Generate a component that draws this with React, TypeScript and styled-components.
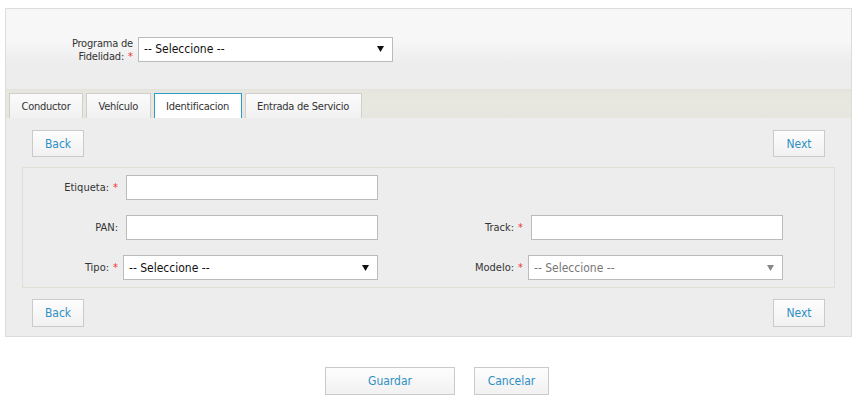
import React from "react";
import styled, { createGlobalStyle } from "styled-components";

const Global = createGlobalStyle`
  html, body { margin: 0; padding: 0; background: #fff; }
  body { font-family: "DejaVu Sans Condensed", Tahoma, "DejaVu Sans", sans-serif; font-size: 11px; color: #333; }
  * { box-sizing: border-box; }
`;

const Page = styled.div`
  padding: 8px 5px 0 5px;
`;

const Panel = styled.div`
  border: 1px solid #dcdcdc;
  background: #ededed;
`;

const TopSection = styled.div`
  height: 80px;
  background: linear-gradient(#f7f7f7 0px, #f7f7f7 32px, #ededed 54px, #ededed 100%);
  display: flex;
  align-items: center;
`;

const TopLabel = styled.label`
  width: 127px;
  display: flex;
  flex-direction: column;
  align-items: flex-end;
  white-space: nowrap;
  font-size: 11px;
  letter-spacing: -0.2px;
  color: #333;
  margin-right: 5px;
  padding-top: 1px;
`;

const LabelLine = styled.span`
  display: block;
  height: 13px;
  line-height: 13px;
`;

const Req = styled.span`
  color: #ee3333;
  margin-left: 4px;
  letter-spacing: 0;
`;

const SelectBox = styled.div<{ $w: number; $disabled?: boolean }>`
  width: ${(p) => p.$w}px;
  height: 25px;
  border: 1px solid #bbb;
  background: #fff;
  display: flex;
  align-items: center;
  justify-content: space-between;
  padding: 0 8px 0 5px;
  font-size: 12px;
  color: ${(p) => (p.$disabled ? "#777" : "#111")};
`;

const TabStrip = styled.div`
  height: 29px;
  background: linear-gradient(#e6e5de, #e8e7e0 60%, #e6e5de);
  display: flex;
  align-items: flex-end;
  gap: 3px;
  padding-left: 3px;
  border-top: 1px solid #e3e2db;
`;

const Tab = styled.div<{ $active?: boolean }>`
  height: 25px;
  padding: 0 11.5px;
  display: flex;
  align-items: center;
  font-size: 11px;
  letter-spacing: -0.25px;
  color: #333;
  background: ${(p) => (p.$active ? "#fff" : "linear-gradient(#fbfbfb, #f1f1f1)")};
  border: 1px solid ${(p) => (p.$active ? "#2b9ccf" : "#cfcfcf")};
  border-bottom: none;
`;

const Content = styled.div`
  padding: 12px 26px 9px 16px;
`;

const NavRow = styled.div`
  display: flex;
  justify-content: space-between;
  padding-left: 10px;
`;

const Button = styled.button<{ $w?: number; $h?: number }>`
  width: ${(p) => p.$w ?? 52}px;
  height: ${(p) => p.$h ?? 27}px;
  border: 1px solid #cacaca;
  background: linear-gradient(#fdfdfd, #f1f1f1);
  color: #2e8fc4;
  font-family: "DejaVu Sans Condensed", Tahoma, "DejaVu Sans", sans-serif;
  font-size: 12px;
  padding: 0;
  cursor: pointer;
`;

const Fieldset = styled.div`
  margin: 10px -10px 11px 0;
  border: 1px solid #e0dfd6;
  padding: 7px 0 7px 0;
  display: grid;
  grid-template-columns: 100px 255px 50px 100px 255px 50px;
  grid-auto-rows: 25px;
  row-gap: 15px;
`;

const FieldLabel = styled.label<{ $col: number }>`
  grid-column: ${(p) => p.$col};
  display: flex;
  align-items: center;
  justify-content: flex-end;
  padding-right: 5px;
  font-size: 11px;
  color: #333;
  white-space: nowrap;
`;

const Cell = styled.div<{ $col: number }>`
  grid-column: ${(p) => p.$col};
  display: flex;
  justify-content: flex-end;
`;

const TextInput = styled.input`
  width: 252px;
  height: 25px;
  border: 1px solid #bbb;
  background: #fff;
  font-size: 12px;
  padding: 0 4px;
  outline: none;
`;

const Footer = styled.div`
  display: flex;
  justify-content: center;
  align-items: flex-start;
  gap: 19px;
  padding: 30px 0 0 17px;
`;

const Arrow = ({ color }: { color: string }) => (
  <svg width="7" height="6" viewBox="0 0 7 6">
    <path d="M0 0 H7 L3.5 6 Z" fill={color} />
  </svg>
);

const Select = ({ w, disabled }: { w: number; disabled?: boolean }) => (
  <SelectBox $w={w} $disabled={disabled}>
    <span>-- Seleccione --</span>
    <Arrow color={disabled ? "#888" : "#111"} />
  </SelectBox>
);

export default function App() {
  return (
    <Page>
      <Global />
      <Panel>
        <TopSection>
          <TopLabel>
            <LabelLine>Programa de</LabelLine>
            <LabelLine>
              <span>Fidelidad:</span>
              <Req>*</Req>
            </LabelLine>
          </TopLabel>
          <Select w={255} />
        </TopSection>
        <TabStrip>
          <Tab>Conductor</Tab>
          <Tab>Vehículo</Tab>
          <Tab $active>Identificacion</Tab>
          <Tab>Entrada de Servicio</Tab>
        </TabStrip>
        <Content>
          <NavRow>
            <Button>Back</Button>
            <Button>Next</Button>
          </NavRow>
          <Fieldset>
            <FieldLabel $col={1}>
              Etiqueta:<Req>*</Req>
            </FieldLabel>
            <Cell $col={2}>
              <TextInput />
            </Cell>
            <FieldLabel $col={1}>PAN:</FieldLabel>
            <Cell $col={2}>
              <TextInput />
            </Cell>
            <FieldLabel $col={4}>
              Track:<Req>*</Req>
            </FieldLabel>
            <Cell $col={5}>
              <TextInput />
            </Cell>
            <FieldLabel $col={1}>
              Tipo:<Req>*</Req>
            </FieldLabel>
            <Cell $col={2}>
              <Select w={255} />
            </Cell>
            <FieldLabel $col={4}>
              Modelo:<Req>*</Req>
            </FieldLabel>
            <Cell $col={5}>
              <Select w={255} disabled />
            </Cell>
          </Fieldset>
          <NavRow>
            <Button $h={28}>Back</Button>
            <Button $h={28}>Next</Button>
          </NavRow>
        </Content>
      </Panel>
      <Footer>
        <Button $w={130} $h={28}>Guardar</Button>
        <Button $w={75} $h={28}>Cancelar</Button>
      </Footer>
    </Page>
  );
}
